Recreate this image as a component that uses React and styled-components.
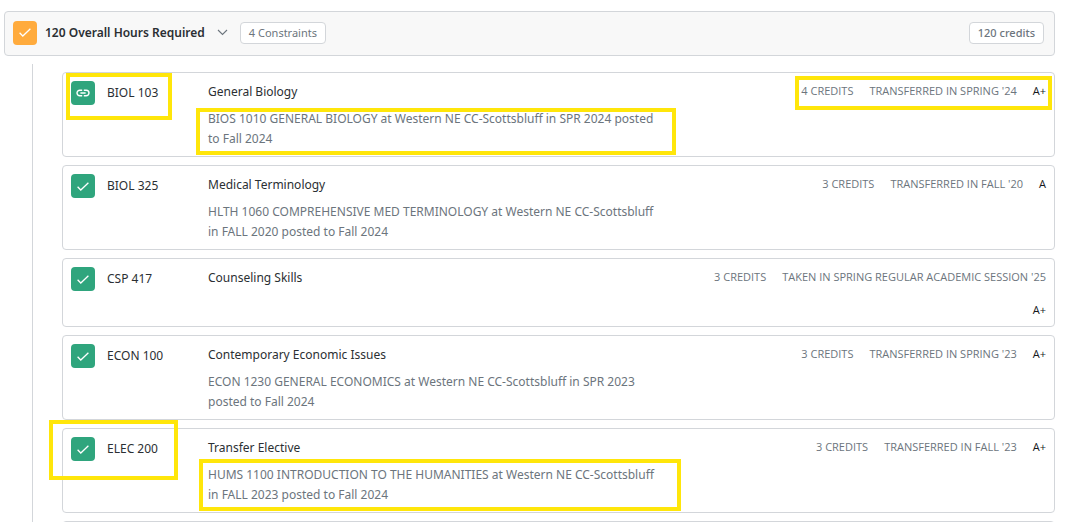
import React, { useState } from "react"
import styled, { createGlobalStyle } from "styled-components";

const courses = [
	{
		code: "BIOL 103",
		icon: "link",
		title: "General Biology",
		note: "BIOS 1010 GENERAL BIOLOGY at Western NE CC-Scottsbluff in SPR 2024 posted to Fall 2024",
		credits: "4 CREDITS",
		term: "TRANSFERRED IN SPRING '24",
		grade: "A+",
		marks: {
			code: "-8px 36px -15px -5px",
			note: "-1px -12px -6px -12px",
			meta: "-5px -6px -11px -6px",
		},
	},
	{
		code: "BIOL 325",
		title: "Medical Terminology",
		note: "HLTH 1060 COMPREHENSIVE MED TERMINOLOGY at Western NE CC-Scottsbluff in FALL 2020 posted to Fall 2024",
		credits: "3 CREDITS",
		term: "TRANSFERRED IN FALL '20",
		grade: "A",
	},
	{
		code: "CSP 417",
		title: "Counseling Skills",
		credits: "3 CREDITS",
		term: "TAKEN IN SPRING REGULAR ACADEMIC SESSION '25",
		grade: "A+",
	},
	{
		code: "ECON 100",
		title: "Contemporary Economic Issues",
		note: "ECON 1230 GENERAL ECONOMICS at Western NE CC-Scottsbluff in SPR 2023 posted to Fall 2024",
		credits: "3 CREDITS",
		term: "TRANSFERRED IN SPRING '23",
		grade: "A+",
	},
	{
		code: "ELEC 200",
		title: "Transfer Elective",
		note: "HUMS 1100 INTRODUCTION TO THE HUMANITIES at Western NE CC-Scottsbluff in FALL 2023 posted to Fall 2024",
		credits: "3 CREDITS",
		term: "TRANSFERRED IN FALL '23",
		grade: "A+",
		marks: {
			code: "-17px 30px -19px -22px",
			note: "-6px -17px -6px -9px",
		},
	},
];

function App(){

	const [open, setOpen] = useState(true);

	return (
		<Page>
			<GlobalStyle />
			<Header>
				<Status color="#ffab3d"><CheckIcon /></Status>
				<Heading>120 Overall Hours Required</Heading>
				<Toggle aria-label="Toggle courses" aria-expanded={open} onClick={() => { setOpen(!open) }}>
					<svg width="11" height="7" viewBox="0 0 11 7" fill="none" stroke="#6c757d" strokeWidth="1.1">
						<path d="M1 1 L5.5 5.5 L10 1" />
					</svg>
				</Toggle>
				<Badge>4 Constraints</Badge>
				<Badge $end>120 credits</Badge>
			</Header>
			{
				open ?
				<List>
					{courses.map((course) => <Course key={course.code} course={course} />)}
					<Card />
				</List> : null
			}
		</Page>
	)
}

function Course({ course }){

	const marks = course.marks || {};

	return (
		<Card>
			<Code>
				<Status color="#2fa57d">
					{course.icon === "link" ? <LinkIcon /> : <CheckIcon />}
				</Status>
				<span>{course.code}</span>
				{marks.code ? <Mark $inset={marks.code} /> : null}
			</Code>
			<Info>
				<Title>{course.title}</Title>
				{
					course.note ?
					<Note>
						{course.note}
						{marks.note ? <Mark $inset={marks.note} /> : null}
					</Note> : null
				}
			</Info>
			<Meta>
				<span>{course.credits}</span>
				<span>{course.term}</span>
				<Grade>{course.grade}</Grade>
				{marks.meta ? <Mark $inset={marks.meta} /> : null}
			</Meta>
		</Card>
	)
}

function CheckIcon(){
	return (
		<svg width="12" height="9" viewBox="0 0 12 9" fill="none" stroke="#fff" strokeWidth="1.3">
			<path d="M0.6 4.8 L3.8 8 L11.4 0.7" />
		</svg>
	)
}

function LinkIcon(){
	return (
		<svg width="14" height="8" viewBox="0 0 14 8" fill="none" stroke="#fff" strokeWidth="1.4">
			<path d="M6.2 1.2 H3.8 A2.8 2.8 0 0 0 3.8 6.8 H6.2 M7.8 1.2 H10.2 A2.8 2.8 0 0 1 10.2 6.8 H7.8 M4.4 4 H9.6" />
		</svg>
	)
}

export default App;

const GlobalStyle = createGlobalStyle`
	* {
		box-sizing: border-box;
	}
	body {
		margin: 0;
		background: #fff;
		color: #2b2f33;
		font-family: "Segoe UI", "Noto Sans", "Open Sans", sans-serif;
		font-size: 12px;
		line-height: 20px;
	}
`;

const Page = styled.main`
	height: 100vh;
	overflow: hidden;
	padding: 11px 12px 0 4px;
`;

const Header = styled.header`
	display: flex;
	align-items: center;
	min-height: 45px;
	padding: 8px 10px 10px 8px;
	border: 1px solid #d3d6da;
	border-radius: 4px;
	background: #f8f8f8;
`;

const Status = styled.span`
	display: flex;
	flex: none;
	align-items: center;
	justify-content: center;
	width: 24px;
	height: 24px;
	border-radius: 4px;
	background: ${props => props.color};
`;

const Heading = styled.h2`
	margin: 0 0 0 8px;
	font-size: 12px;
	font-weight: 600;
`;

const Toggle = styled.button`
	display: flex;
	align-items: center;
	padding: 6px 12px;
	border: 0;
	background: none;
	cursor: pointer;
`;

const Badge = styled.span`
	margin-left: ${props => props.$end ? "auto" : "0"};
	padding: 0 8px;
	border: 1px solid #d3d6da;
	border-radius: 4px;
	background: #fff;
	color: #6c757d;
	font-size: 11px;
	font-weight: ${props => props.$end ? 500 : 400};
`;

const List = styled.section`
	display: flex;
	flex-direction: column;
	gap: 8px;
	margin: 8px 0 0 28px;
	padding: 8px 0 0 29px;
	border-left: 1px solid #d3d6da;
`;

const Card = styled.article`
	display: flex;
	align-items: flex-start;
	min-height: 69px;
	padding: 8px 8px 7px;
	border: 1px solid #d3d6da;
	border-radius: 4px;
`;

const Code = styled.div`
	position: relative;
	display: flex;
	flex: none;
	align-items: center;
	gap: 12px;
	width: 137px;
`;

const Info = styled.div`
	flex: 1;
	min-width: 0;
	padding-top: 1px;
`;

const Title = styled.h3`
	margin: 0;
	font-size: 12px;
	font-weight: 400;
`;

const Note = styled.p`
	position: relative;
	max-width: 456px;
	margin: 7px 0 0;
	color: #6c757d;
`;

const Meta = styled.div`
	position: relative;
	display: flex;
	flex-wrap: wrap;
	justify-content: flex-end;
	gap: 17px 16px;
	max-width: 350px;
	padding-top: 2px;
	color: #6c757d;
	font-family: "Segoe UI", "Open Sans", sans-serif;
	font-size: 11px;
	line-height: 16px;
`;

const Grade = styled.span`
	color: #16191c;
	font-weight: 500;
`;

/* yellow marker frame, laid over the part it points out */
const Mark = styled.span`
	position: absolute;
	inset: ${props => props.$inset};
	border: 4px solid #ffe60a;
	pointer-events: none;
`;
